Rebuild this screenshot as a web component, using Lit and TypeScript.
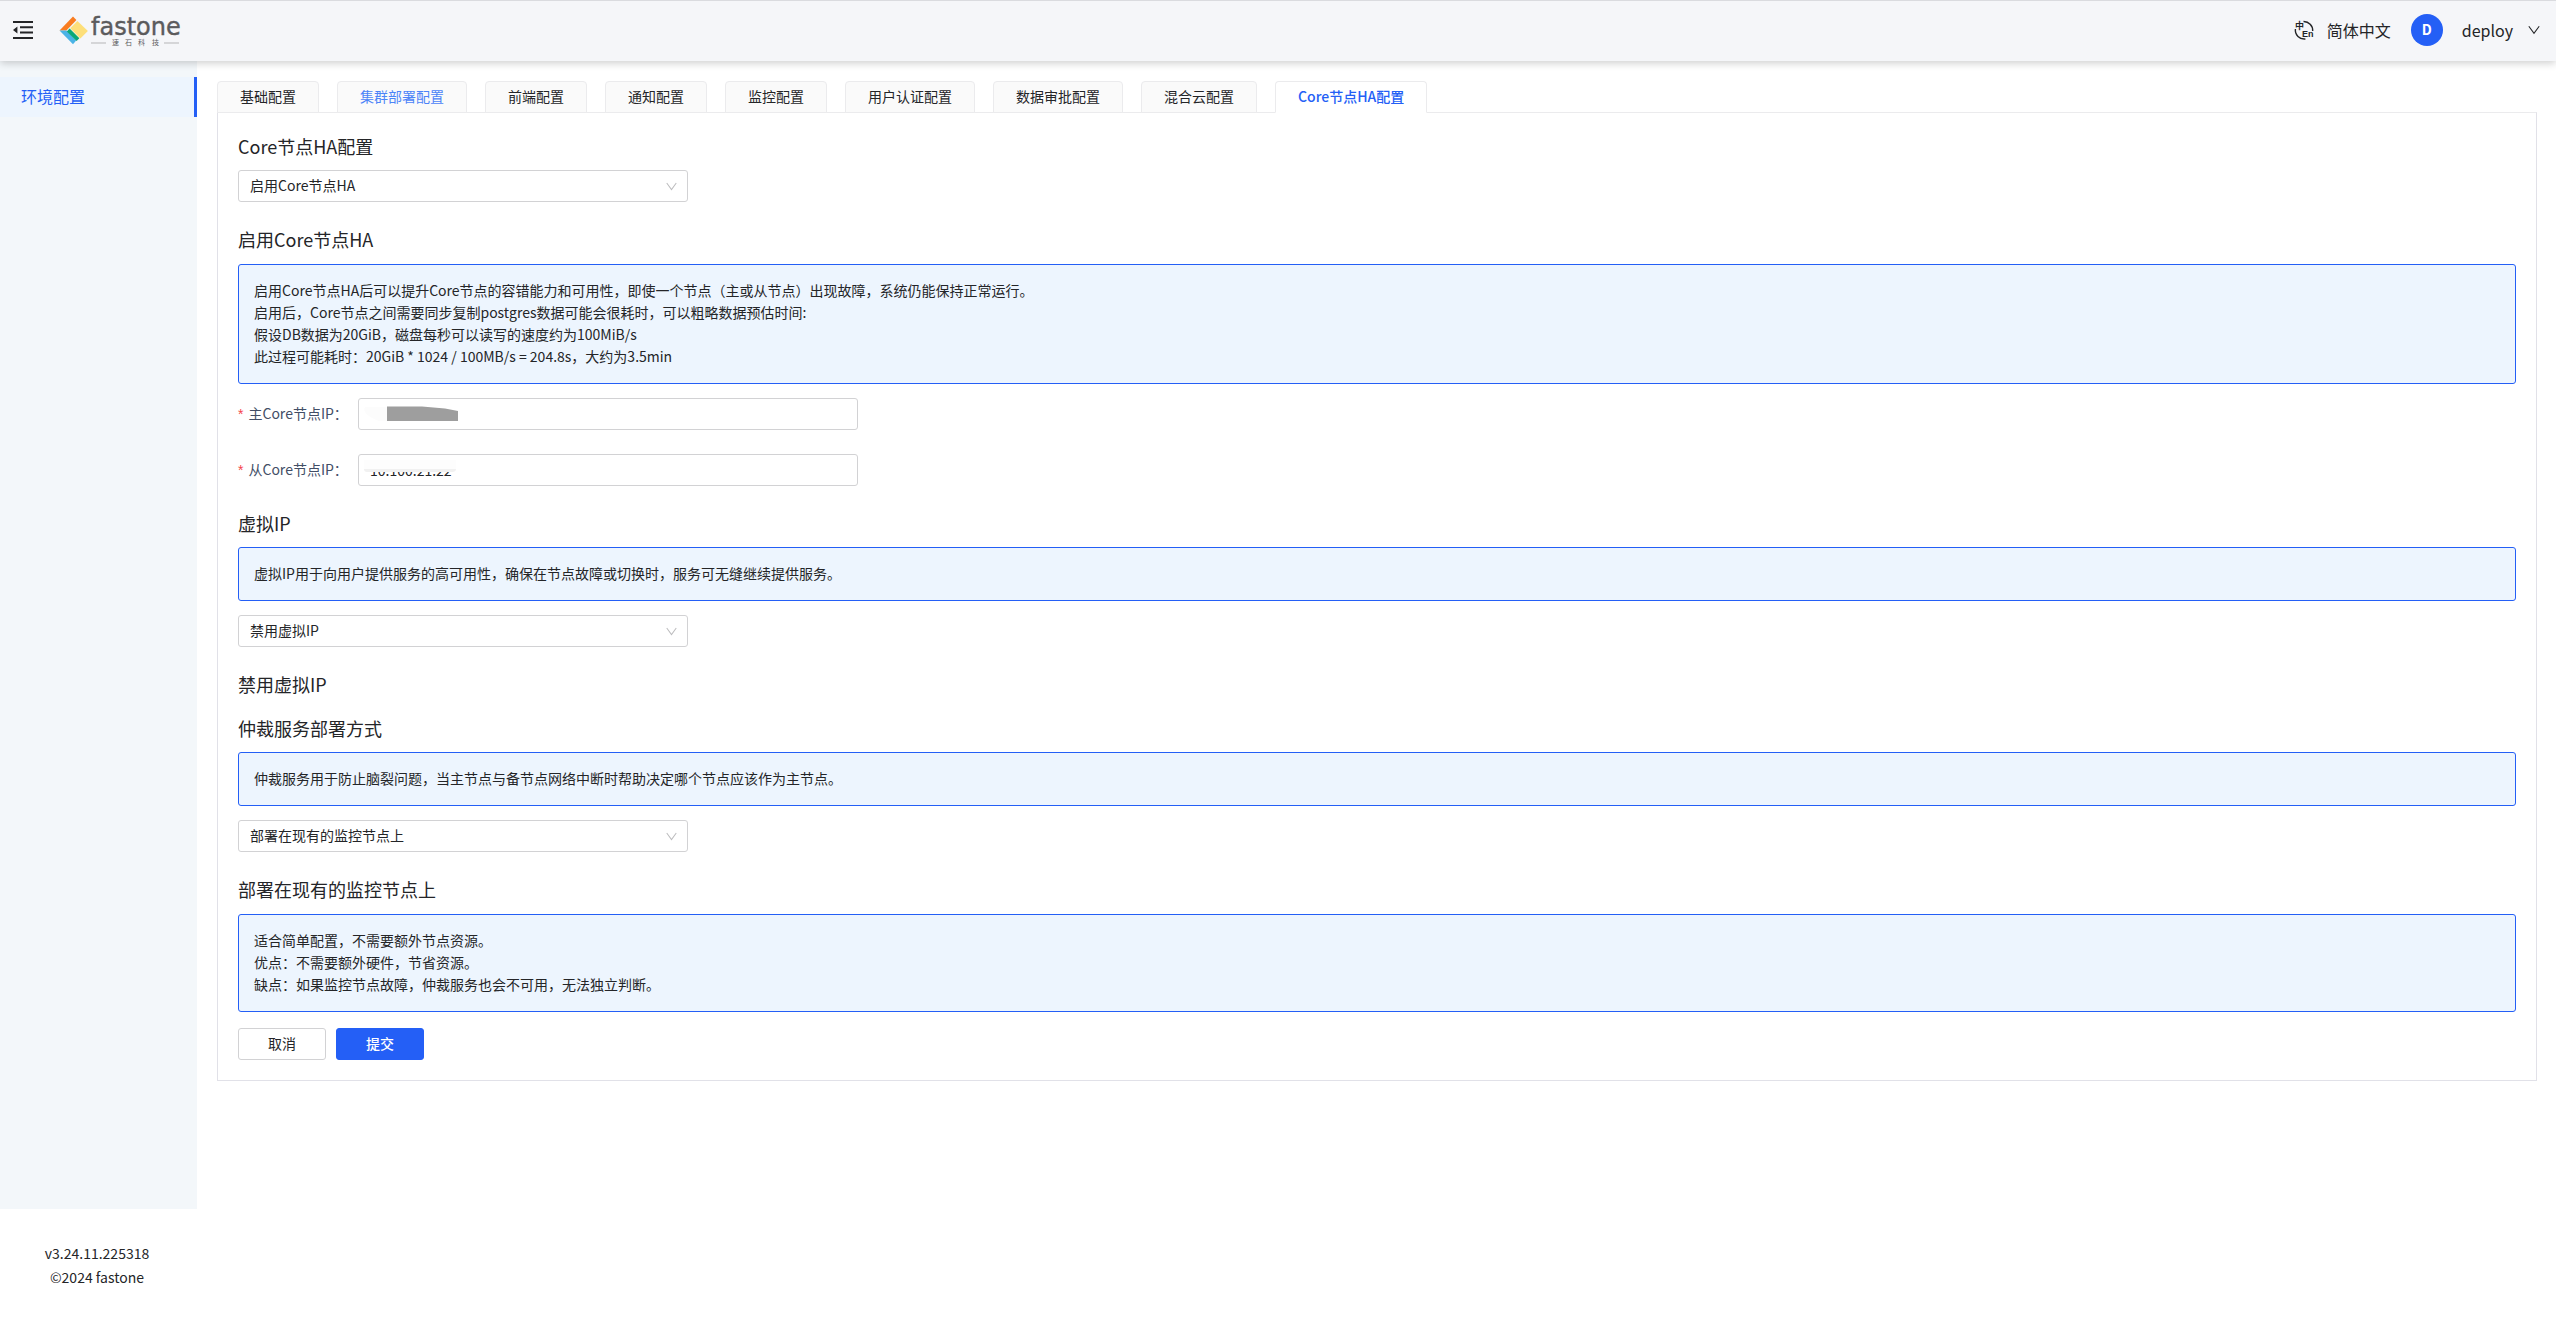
import { LitElement, html, css, svg } from "lit";
import { customElement, state } from "lit/decorators.js";

const TABS = [
  { label: "基础配置" },
  { label: "集群部署配置", hover: true },
  { label: "前端配置" },
  { label: "通知配置" },
  { label: "监控配置" },
  { label: "用户认证配置" },
  { label: "数据审批配置" },
  { label: "混合云配置" },
  { label: "Core节点HA配置" },
];

const chevron = (cls: string) => html`<svg class=${cls} viewBox="0 0 12 12" aria-hidden="true">
  ${svg`<path d="M0.8 2.2 L6 9.4 L11.2 2.2" fill="none" stroke="currentColor" stroke-width="1.1"/>`}
</svg>`;

@customElement("app-root")
export class AppRoot extends LitElement {
  @state() private active = 8;

  static styles = css`
    :host {
      display: flex;
      flex-direction: column;
      min-height: 100vh;
      background: #fff;
      color: #242528;
      font-family: "Noto Sans CJK SC", sans-serif;
      font-size: 14px;
      line-height: 22px;
    }
    *, *::before, *::after { box-sizing: border-box; }
    button, select, input { font: inherit; color: inherit; margin: 0; }
    a { color: inherit; text-decoration: none; }

    .header {
      display: flex;
      align-items: center;
      justify-content: space-between;
      height: 61px;
      padding: 0 16px 2px 13px;
      border-top: 1px solid #dadbdf;
      background: #f5f6f9;
      box-shadow: 0 2px 8px rgba(0, 0, 0, 0.2);
      z-index: 1;
    }
    .brand, .tools, .user { display: flex; align-items: center; }
    .brand { gap: 26px; }
    .icon-btn, .user { border: 0; padding: 0; background: none; cursor: pointer; }
    .icon-btn { display: flex; }
    .fold { width: 20px; height: 18px; }
    .logo { display: block; width: 124px; height: 36px; overflow: visible; }
    .tools { font-size: 16px; line-height: 24px; }
    .lang { display: flex; align-items: center; gap: 13px; margin-right: 20px; }
    .lang svg { width: 20px; height: 20px; overflow: visible; }
    .avatar {
      width: 32px;
      height: 32px;
      margin-right: 19px;
      border-radius: 50%;
      background: #245ff6;
      color: #fff;
      font-size: 14px;
      font-weight: 700;
      line-height: 30px;
      text-align: center;
    }
    .caret { width: 12px; height: 12px; margin-left: 15px; }

    .body { display: flex; flex: 1; }
    .side { display: flex; flex-direction: column; width: 197px; flex: none; }
    .menu { flex: 1; padding-top: 16px; background: #f3f7fa; }
    .menu-item {
      display: block;
      padding: 7px 21px 9px;
      border-right: 3px solid #245ff6;
      background: #edf5fe;
      color: #245ff6;
      font-size: 16px;
      line-height: 24px;
    }
    .version { padding: 32px 3px 39px 0; text-align: center; line-height: 24px; }

    .main { flex: 1; min-width: 0; padding: 20px 19px 20px 20px; }
    .tabs { display: flex; gap: 18px; }
    .tab {
      height: 32px;
      margin-bottom: -1px;
      padding: 0 22px 2px;
      border: 1px solid #ebebed;
      border-radius: 4px 4px 0 0;
      background: #fafafa;
      white-space: nowrap;
      cursor: pointer;
    }
    .tab.hover { color: #4c84f8; }
    .tab.active {
      border-bottom-color: #fff;
      background: #fff;
      color: #245ff6;
      font-weight: 500;
    }
    .panel { padding: 20px; border: 1px solid #e1e1e8; border-top-color: #ebebed; }

    h2, h3 { margin: 0; font-size: 18px; line-height: 26px; font-weight: 400; }
    h2 { margin-bottom: 11px; }
    h3 { margin-bottom: 12px; }
    .block { margin-bottom: 24px; }
    .empty { margin-bottom: 18px; }
    .alert {
      margin-bottom: 14px;
      padding: 14px 15px 16px;
      border: 1px solid #245ff6;
      border-radius: 3px;
      background: #edf5fe;
    }
    .alert p { margin: 0; }
    .select { position: relative; width: 450px; max-width: 100%; }
    .select select {
      display: block;
      width: 100%;
      height: 32px;
      padding: 0 30px 2px 11px;
      border: 1px solid #d2d2d4;
      border-radius: 3px;
      background: #fff;
      appearance: none;
    }
    .arrow {
      position: absolute;
      right: 11px;
      top: 11px;
      width: 11px;
      height: 11px;
      color: #bcbcbe;
      pointer-events: none;
    }
    .row { display: flex; align-items: center; margin-bottom: 24px; }
    .row label { width: 120px; padding-bottom: 2px; color: #424e66; white-space: nowrap; }
    .req { margin-right: 5px; color: #f5454a; font-family: "Liberation Sans", sans-serif; }
    .field { position: relative; width: 500px; }
    .field input {
      display: block;
      width: 100%;
      height: 32px;
      padding: 0 11px;
      border: 1px solid #d2d2d4;
      border-radius: 3px;
      background: #fff;
    }
    .mask { position: absolute; left: 3px; top: 6px; width: 100px; height: 20px; pointer-events: none; }
    .actions { display: flex; gap: 10px; margin-top: 16px; }
    .btn {
      width: 88px;
      height: 32px;
      padding: 0 0 2px;
      border: 1px solid #d2d2d4;
      border-radius: 3px;
      background: #fff;
      cursor: pointer;
    }
    .btn.primary { border-color: #245ff6; background: #245ff6; color: #fff; font-weight: 500; }
  `;

  private select(label: string, value: string) {
    return html`<div class="select">
      <select aria-label=${label}><option>${value}</option></select>
      ${chevron("arrow")}
    </div>`;
  }

  private alert(lines: string[]) {
    return html`<div class="alert">${lines.map((l) => html`<p>${l}</p>`)}</div>`;
  }

  render() {
    return html`
      <header class="header">
        <div class="brand">
          <button class="icon-btn" aria-label="菜单">
            <svg class="fold" viewBox="0 0 20 18" fill="#242528">
              <path d="M0 0h20v2H0zM7 5.3h13v2H7zM7 10.6h13v2H7zM0 16h20v2H0zM0 9l4.4-3.6v7.2z"/>
            </svg>
          </button>
          <svg class="logo" viewBox="0 0 124 36" role="img" aria-label="fastone">
            <g transform="translate(0 4)">
              <path d="M0.5 14.4 L14 0.6 L17.4 4 L7.4 14.4 Z" fill="#f97d21"/>
              <path d="M18.4 5 L28.9 15 L21.4 22.4 L11.2 12.2 Z" fill="#fddf7a"/>
              <path d="M0.5 14.4 L7.4 14.4 L17.2 24.6 L14 28.2 Z" fill="#4ab3e6"/>
              <path d="M7.8 15.4 L10.6 12.6 L20.4 22.2 L17.6 25 Z" fill="#0aa876"/>
            </g>
            <text x="32" y="23" font-family="DejaVu Sans, sans-serif" font-size="24" fill="#5b5b5d" stroke="#5b5b5d" stroke-width="0.4">fastone</text>
            <path d="M32 31h15M105 31h15" stroke="#b5b5b7" stroke-width="1"/>
            <g font-family="Noto Sans CJK SC, sans-serif" font-size="7" fill="#5b5b5d">
              <text x="53" y="33">速</text><text x="66" y="33">石</text>
              <text x="79" y="33">科</text><text x="93" y="33">技</text>
            </g>
          </svg>
        </div>
        <div class="tools">
          <button class="icon-btn lang">
            <svg viewBox="0 0 20 20" aria-hidden="true">
              <path d="M9.5 1.5a9 9 0 0 1 9.2 9.5M1.4 9a9 9 0 0 0 10 10" fill="none" stroke="#242528" stroke-width="1.4"/>
              <g fill="#242528" font-weight="700">
                <text x="1" y="9" font-family="Noto Sans CJK SC, sans-serif" font-size="9">中</text>
                <text x="8" y="17" font-family="Liberation Sans, sans-serif" font-size="9">En</text>
              </g>
            </svg>
            <span>简体中文</span>
          </button>
          <button class="user">
            <span class="avatar">D</span><span>deploy</span>${chevron("caret")}
          </button>
        </div>
      </header>
      <div class="body">
        <div class="side">
          <nav class="menu"><a class="menu-item" href="#env">环境配置</a></nav>
          <div class="version">v3.24.11.225318<br />©2024 fastone</div>
        </div>
        <main class="main">
          <div class="tabs" role="tablist">
            ${TABS.map((t, i) => html`<button
              class="tab ${i === this.active ? "active" : ""} ${t.hover ? "hover" : ""}"
              role="tab"
              aria-selected=${i === this.active}
              @click=${() => (this.active = i)}
            >${t.label}</button>`)}
          </div>
          <form class="panel" @submit=${(e: Event) => e.preventDefault()}>
            <h2>Core节点HA配置</h2>
            <div class="block">${this.select("Core节点HA配置", "启用Core节点HA")}</div>

            <h3>启用Core节点HA</h3>
            ${this.alert([
              "启用Core节点HA后可以提升Core节点的容错能力和可用性，即使一个节点（主或从节点）出现故障，系统仍能保持正常运行。",
              "启用后，Core节点之间需要同步复制postgres数据可能会很耗时，可以粗略数据预估时间:",
              "假设DB数据为20GiB，磁盘每秒可以读写的速度约为100MiB/s",
              "此过程可能耗时：20GiB * 1024 / 100MB/s = 204.8s，大约为3.5min",
            ])}
            <div class="row">
              <label for="primary"><span class="req">*</span>主Core节点IP：</label>
              <div class="field">
                <input id="primary" type="text" />
                <svg class="mask" viewBox="0 0 100 20" aria-hidden="true">
                  <path d="M4 3 Q0 10 18 17 H26 V3 Z" fill="#fcfcfc"/>
                  <path d="M26 2.5 H61 L84 4.5 L97 7 V17 H26 Z" fill="#9e9e9e"/>
                </svg>
              </div>
            </div>
            <div class="row">
              <label for="secondary"><span class="req">*</span>从Core节点IP：</label>
              <div class="field">
                <input id="secondary" type="text" value="10.100.21.22" />
                <svg class="mask" viewBox="0 0 100 20" aria-hidden="true">
                  <path d="M3 0 H95 V10 H3 Z" fill="#fdfdfd"/>
                  <path d="M3 9 H95 Q95 12 91 12 H6 Q3 12 3 9 Z" fill="#f1f1f1"/>
                </svg>
              </div>
            </div>

            <h2>虚拟IP</h2>
            ${this.alert(["虚拟IP用于向用户提供服务的高可用性，确保在节点故障或切换时，服务可无缝继续提供服务。"])}
            <div class="block">${this.select("虚拟IP", "禁用虚拟IP")}</div>
            <h3 class="empty">禁用虚拟IP</h3>

            <h2>仲裁服务部署方式</h2>
            ${this.alert(["仲裁服务用于防止脑裂问题，当主节点与备节点网络中断时帮助决定哪个节点应该作为主节点。"])}
            <div class="block">${this.select("仲裁服务部署方式", "部署在现有的监控节点上")}</div>

            <h3>部署在现有的监控节点上</h3>
            ${this.alert([
              "适合简单配置，不需要额外节点资源。",
              "优点：不需要额外硬件，节省资源。",
              "缺点：如果监控节点故障，仲裁服务也会不可用，无法独立判断。",
            ])}
            <div class="actions">
              <button class="btn" type="button">取消</button>
              <button class="btn primary" type="submit">提交</button>
            </div>
          </form>
        </main>
      </div>
    `;
  }
}
